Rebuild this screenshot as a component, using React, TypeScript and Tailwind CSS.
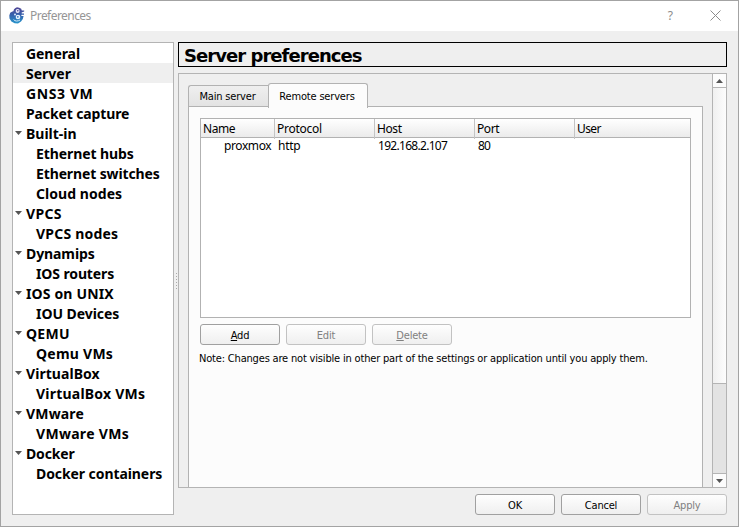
import React from "react";

const tahoma = "font-['DejaVu_Sans_Condensed','DejaVu_Sans',sans-serif] [font-stretch:condensed]";
const segoe = "font-['Noto_Sans','Open_Sans',sans-serif]";

type Node = { label: string; child?: boolean; open?: boolean; selected?: boolean; fit: string };

const tree: Node[] = [
  { label: "General", fit: "tracking-[-0.07px]" },
  { label: "Server", selected: true, fit: "tracking-[0px]" },
  { label: "GNS3 VM", fit: "tracking-[0.6px]" },
  { label: "Packet capture", fit: "tracking-[-0.12px]" },
  { label: "Built-in", open: true, fit: "tracking-[0px]" },
  { label: "Ethernet hubs", child: true, fit: "tracking-[-0.1px]" },
  { label: "Ethernet switches", child: true, fit: "tracking-[-0.13px]" },
  { label: "Cloud nodes", child: true, fit: "tracking-[0.05px]" },
  { label: "VPCS", open: true, fit: "tracking-[0.3px]" },
  { label: "VPCS nodes", child: true, fit: "tracking-[0.2px]" },
  { label: "Dynamips", open: true, fit: "tracking-[-0.1px]" },
  { label: "IOS routers", child: true, fit: "tracking-[-0.12px]" },
  { label: "IOS on UNIX", open: true, fit: "tracking-[0.15px]" },
  { label: "IOU Devices", child: true, fit: "tracking-[-0.05px]" },
  { label: "QEMU", open: true, fit: "tracking-[0.3px]" },
  { label: "Qemu VMs", child: true, fit: "tracking-[0.25px]" },
  { label: "VirtualBox", open: true, fit: "tracking-[0.05px]" },
  { label: "VirtualBox VMs", child: true, fit: "tracking-[0.22px]" },
  { label: "VMware", open: true, fit: "tracking-[0.17px]" },
  { label: "VMware VMs", child: true, fit: "tracking-[0.3px]" },
  { label: "Docker", open: true, fit: "tracking-[-0.15px]" },
  { label: "Docker containers", child: true, fit: "tracking-[-0.08px]" },
];

function Arrow({ up = false }: { up?: boolean }) {
  return (
    <svg width="7" height="4" viewBox="0 0 7 4" className={up ? "rotate-180" : ""}>
      <path d="M0 0H7L3.5 4Z" fill="#555" />
    </svg>
  );
}

function Logo() {
  return (
    <svg width="16" height="17" viewBox="0 0 16 17" className="shrink-0">
      <defs>
        <linearGradient id="logo" x1="0" y1="0" x2="0" y2="1">
          <stop offset="0" stopColor="#504494" />
          <stop offset="0.5" stopColor="#3563ae" />
          <stop offset="1" stopColor="#2795cb" />
        </linearGradient>
      </defs>
      <path
        d="M5 2.2 6.5 1 8 .2 10.2.8 12.2 1.8 12.8 3.4H15.2V4.6L12.6 5.4 12.8 6.6H15V7.8H12.6L12.2 9H14.6L13.8 12 12 14.6 9 16.4 5.6 16.3 2.4 14.4.5 11.5.3 8.5 1.2 5.8 3.4 4.6 4.4 4.2Z"
        fill="url(#logo)"
      />
      <circle cx="8.6" cy="4" r="2" fill="#e9e8f8" />
      <circle cx="8.8" cy="3.8" r=".8" fill="#4a4090" />
      <circle cx="6" cy="7.6" r="1" fill="#dbe8fa" />
      <circle cx="9" cy="10" r="2.3" fill="#e6f3ff" />
      <circle cx="8.8" cy="9.8" r=".9" fill="#3a78bd" />
      <path d="M4.6 12.6c1.4 1.9 4.4 1.8 6.4.4" fill="none" stroke="#d4ecfa" strokeWidth="1" />
    </svg>
  );
}

function Button({ children, disabled = false }: { children: React.ReactNode; disabled?: boolean }) {
  return (
    <button
      className={`flex h-[21px] w-[80px] items-center justify-center rounded-[3px] border bg-linear-to-b from-[#fefefe] to-[#efefef] pt-[2px] text-[11px] leading-none tracking-[-0.2px] ${
        disabled ? "border-[#c2c2c2] text-[#808080]" : "border-[#a0a0a0] text-black"
      }`}
    >
      {children}
    </button>
  );
}

function ServerTable() {
  const head = "border-l border-[#c4c4c4] pl-[2px]";
  return (
    <div className={`h-[200px] w-[491px] border border-[#b2b2b2] bg-white text-[12px] text-black ${segoe}`}>
      <div className="grid h-[19px] grid-cols-[73px_100px_100px_100px_116px] border-b border-[#b2b2b2] bg-linear-to-b from-white to-[#ebebeb] leading-[20px] tracking-[-0.4px]">
        <div className="pl-[2px]">Name</div>
        <div className={`${head} tracking-[-0.25px]`}>Protocol</div>
        <div className={head}>Host</div>
        <div className={head}>Port</div>
        <div className={`${head} tracking-[-0.6px]`}>User</div>
      </div>
      <div className="grid h-[17px] grid-cols-[73px_100px_100px_100px_116px] leading-[16px]">
        <div className="pl-[23px] tracking-[-0.4px]">proxmox</div>
        <div className="pl-[4px] tracking-[-0.25px]">http</div>
        <div className="pl-[4px] tracking-[-0.7px]">192.168.2.107</div>
        <div className="pl-[4px] tracking-[-0.9px]">80</div>
      </div>
    </div>
  );
}

export default function App() {
  return (
    <div className={`flex h-[527px] w-[739px] flex-col overflow-hidden border border-[#a3a3a3] bg-[#efefef] ${tahoma}`}>
      <header className="flex h-[30px] shrink-0 items-center bg-white pl-[8px]">
        <span className="-mt-[2px]"><Logo /></span>
        <span className={`ml-[5px] text-[12px] tracking-[-0.55px] text-[#969696] ${segoe}`}>Preferences</span>
        <span className={`ml-auto text-[12px] text-[#8c8c8c] ${segoe}`}>?</span>
        <svg width="11" height="11" viewBox="0 0 11 11" className="-mt-px mr-[17px] ml-[37px]">
          <path d="M.5.5 10.5 10.5M10.5.5.5 10.5" stroke="#8c8c8c" strokeWidth="1" />
        </svg>
      </header>

      <div className="flex pt-[11px] pl-[11px]">
        <nav className={`h-[473px] w-[162px] shrink-0 border border-[#b4b4b4] bg-white text-[14px] font-bold text-black ${segoe}`}>
          {tree.map((n) => (
            <div key={n.label} className={`flex h-[20px] items-center ${n.selected ? "bg-[#efefef]" : ""} ${n.child ? "pl-[23px]" : "pl-[2px]"}`}>
              {!n.child && <span className="flex w-[11px] shrink-0 items-center">{n.open && <Arrow />}</span>}
              <span className={`whitespace-nowrap pt-[2px] leading-[20px] ${n.fit}`}>{n.label}</span>
            </div>
          ))}
        </nav>

        <div className="flex h-[473px] w-[4px] shrink-0 items-center justify-center">
          <div className="mt-1 h-[16px] w-px bg-[repeating-linear-gradient(to_bottom,#aaa_0_1px,transparent_1px_3px)]" />
        </div>

        <main className="w-[549px]">
          <h1 className="flex h-[25px] items-center border border-black pl-[5px] font-['DejaVu_Sans',sans-serif] text-[18px] leading-[23px] font-bold tracking-[-0.95px] text-black [font-stretch:normal]">
            <span className="whitespace-nowrap pt-[2px]">Server preferences</span>
          </h1>

          <section className="mt-[6px] flex h-[415px] overflow-hidden border border-[#b4b4b4]">
            <div className="w-[533px] pl-[9px]">
              <div className="flex h-[33px] items-end text-[11px] tracking-[-0.17px] text-black">
                <div className="flex h-[22px] w-[80px] items-center justify-center rounded-tl-[3px] border border-r-0 border-[#b2b2b2] bg-linear-to-b from-[#efefef] to-[#e3e3e3] pt-[3px] pr-[2px]">
                  Main server
                </div>
                <div className="z-10 -mb-px flex h-[25px] w-[100px] items-center justify-center rounded-t-[3px] border border-b-0 border-[#b2b2b2] bg-[#fcfcfc] pt-[2px] pr-[2px]">
                  Remote servers
                </div>
              </div>
              <div className="-mt-px h-[382px] w-[515px] border border-b-0 border-[#b2b2b2] bg-[#fcfcfc] pt-[11px] pl-[11px]">
                <ServerTable />
                <div className="mt-[6px] flex gap-[6px]">
                  <Button><span><u>A</u>dd</span></Button>
                  <Button disabled>Edit</Button>
                  <Button disabled><span><u>D</u>elete</span></Button>
                </div>
                <p className="mt-[6px] -ml-px text-[11px] leading-[15px] tracking-[-0.18px] whitespace-nowrap text-black">
                  Note: Changes are not visible in other part of the settings or application until you apply them.
                </p>
              </div>
            </div>
            <div className="flex w-[14px] flex-col border-l border-[#b4b4b4] bg-[#e3e3e3]">
              <div className="flex h-[14px] items-center justify-center border-b border-[#b4b4b4] bg-[#fcfcfc]">
                <Arrow up />
              </div>
              <div className="h-[296px] border-b border-[#b4b4b4] bg-linear-to-r from-[#f0f0f0] to-[#fdfdfd]" />
              <div className="mt-auto flex h-[14px] items-center justify-center border-t border-[#b4b4b4] bg-[#fcfcfc]">
                <Arrow />
              </div>
            </div>
          </section>

          <footer className="mt-[6px] flex justify-end gap-[6px]">
            <Button>OK</Button>
            <Button>Cancel</Button>
            <Button disabled>Apply</Button>
          </footer>
        </main>
      </div>
    </div>
  );
}
